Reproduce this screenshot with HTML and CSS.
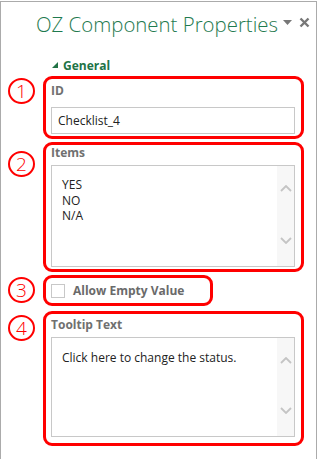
FILE: index.html
```html
<!DOCTYPE html>
<html lang="en">
<head>
    <meta charset="UTF-8">
    <meta name="viewport" content="width=device-width, initial-scale=1.0">
    <title>OZ Component Properties</title>
    <link rel="stylesheet" href="styles.css">
</head>
<body>
    <div class="pane">
        <header class="pane-header">
            <h1 class="pane-title">OZ Component Properties</h1>
            <span class="pane-menu">
                <svg width="9" height="6" viewBox="0 0 9 6"><polygon points="0,0 9,0 4.5,5" fill="#777"/></svg>
            </span>
            <span class="pane-close">
                <svg width="11" height="11" viewBox="0 0 11 11"><path d="M1.5 1.5 L9.5 9.5 M9.5 1.5 L1.5 9.5" stroke="#777" stroke-width="2.4"/></svg>
            </span>
        </header>

        <div class="section-head">
            <svg width="6" height="6" viewBox="0 0 6 6"><polygon points="6,0 6,6 0,6" fill="#217346"/></svg>
            <span>General</span>
        </div>

        <div class="fields">
            <div class="row">
                <span class="num">1</span>
                <div class="callout callout-id">
                    <div class="label">ID</div>
                    <div class="input">Checklist_4</div>
                </div>
            </div>

            <div class="row row-items">
                <span class="num">2</span>
                <div class="callout callout-items">
                    <div class="label">Items</div>
                    <div class="textarea">
                        <div class="textarea-text">YES<br>NO<br>N/A</div>
                        <div class="scrollbar">
                            <svg width="12" height="7" viewBox="0 0 12 7"><path d="M1 6 L6 1 L11 6" fill="none" stroke="#c4c4c4" stroke-width="1.8"/></svg>
                            <svg width="12" height="7" viewBox="0 0 12 7"><path d="M1 1 L6 6 L11 1" fill="none" stroke="#c4c4c4" stroke-width="1.8"/></svg>
                        </div>
                    </div>
                </div>
            </div>

            <div class="row">
                <span class="num">3</span>
                <div class="callout callout-check">
                    <span class="checkbox"></span>
                    <span class="check-label">Allow Empty Value</span>
                </div>
            </div>

            <div class="row row-tip">
                <span class="num">4</span>
                <div class="callout callout-tip">
                    <div class="label">Tooltip Text</div>
                    <div class="textarea textarea-tip">
                        <div class="textarea-text">Click here to change the status.</div>
                        <div class="scrollbar">
                            <svg width="12" height="7" viewBox="0 0 12 7"><path d="M1 6 L6 1 L11 6" fill="none" stroke="#c4c4c4" stroke-width="1.8"/></svg>
                            <svg width="12" height="7" viewBox="0 0 12 7"><path d="M1 1 L6 6 L11 1" fill="none" stroke="#c4c4c4" stroke-width="1.8"/></svg>
                        </div>
                    </div>
                </div>
            </div>
        </div>
    </div>
</body>
</html>
```

FILE: styles.css
```css
html, body {
    margin: 0;
    background: #fff;
}
body {
    font-family: "Open Sans", "Noto Sans", sans-serif;
    font-size: 12px;
    color: #222;
}
.pane {
    margin-top: 1px;
    width: 317px;
    height: 458px;
    box-sizing: border-box;
    border: 1px solid #ababab;
    border-bottom: none;
}
.pane-header {
    display: flex;
    align-items: flex-start;
    height: 55px;
    padding: 8px 0 0 35px;
    box-sizing: border-box;
}
.pane-title {
    margin: 0;
    font-size: 20.4px;
    font-weight: 300;
    line-height: 28px;
    color: #1f7a4f;
    white-space: nowrap;
}
.pane-menu {
    margin: 10px 0 0 auto;
    line-height: 0;
}
.pane-close {
    margin: 7px 6px 0 7px;
    line-height: 0;
}
.section-head {
    display: flex;
    align-items: center;
    gap: 5px;
    padding-left: 51px;
    height: 16px;
    font-weight: bold;
    color: #217346;
}
.fields {
    display: flex;
    flex-direction: column;
    gap: 3px;
    margin-top: 3px;
}
.row {
    display: flex;
    align-items: flex-start;
}
.num {
    flex: none;
    width: 27px;
    height: 26px;
    box-sizing: border-box;
    margin: 2px 8px 0 7px;
    border: 2px solid #f00;
    border-radius: 50%;
    color: #f00;
    font-size: 19px;
    font-weight: 300;
    line-height: 22px;
    text-align: center;
}
.row-items .num {
    margin-top: 9px;
}
.row-tip {
    margin-top: 2px;
}
.row-tip .num {
    margin-top: 4px;
}
.callout {
    width: 261px;
    box-sizing: border-box;
    border: 3px solid #f00;
    border-radius: 9px;
    padding: 0 6px 2px 5px;
}
.callout-id {
    padding-top: 4px;
}
.callout-id .label {
    margin-bottom: 8px;
}
.callout-items .label {
    margin-bottom: 4px;
}
.callout-tip {
    padding-top: 3px;
    padding-bottom: 6px;
}
.callout-tip .label {
    margin-bottom: 4px;
}
.label {
    height: 16px;
    line-height: 16px;
    font-weight: bold;
    color: #707070;
}
.input {
    height: 27px;
    box-sizing: border-box;
    border: 1px solid #c8c8c8;
    padding-left: 6px;
    line-height: 25px;
}
.textarea {
    display: flex;
    height: 102px;
    box-sizing: border-box;
    border: 1px solid #c8c8c8;
}
.textarea-tip {
    height: 100px;
}
.textarea-text {
    flex: 1;
    padding: 11px 0 0 10px;
    line-height: 15.5px;
}
.textarea-tip .textarea-text {
    padding-top: 12px;
}
.scrollbar {
    flex: none;
    width: 17px;
    display: flex;
    flex-direction: column;
    justify-content: space-between;
    align-items: center;
    padding: 19px 0 22px;
    box-sizing: border-box;
    background: #f7f7f7;
}
.callout-check {
    width: 170px;
    height: 31px;
    display: flex;
    align-items: center;
    gap: 8px;
    padding: 0 0 0 5px;
}
.checkbox {
    width: 14px;
    height: 14px;
    box-sizing: border-box;
    border: 1px solid #c8c8c8;
    background: #fff;
}
.check-label {
    font-weight: bold;
    color: #6a6a6a;
    line-height: 16px;
}
```
